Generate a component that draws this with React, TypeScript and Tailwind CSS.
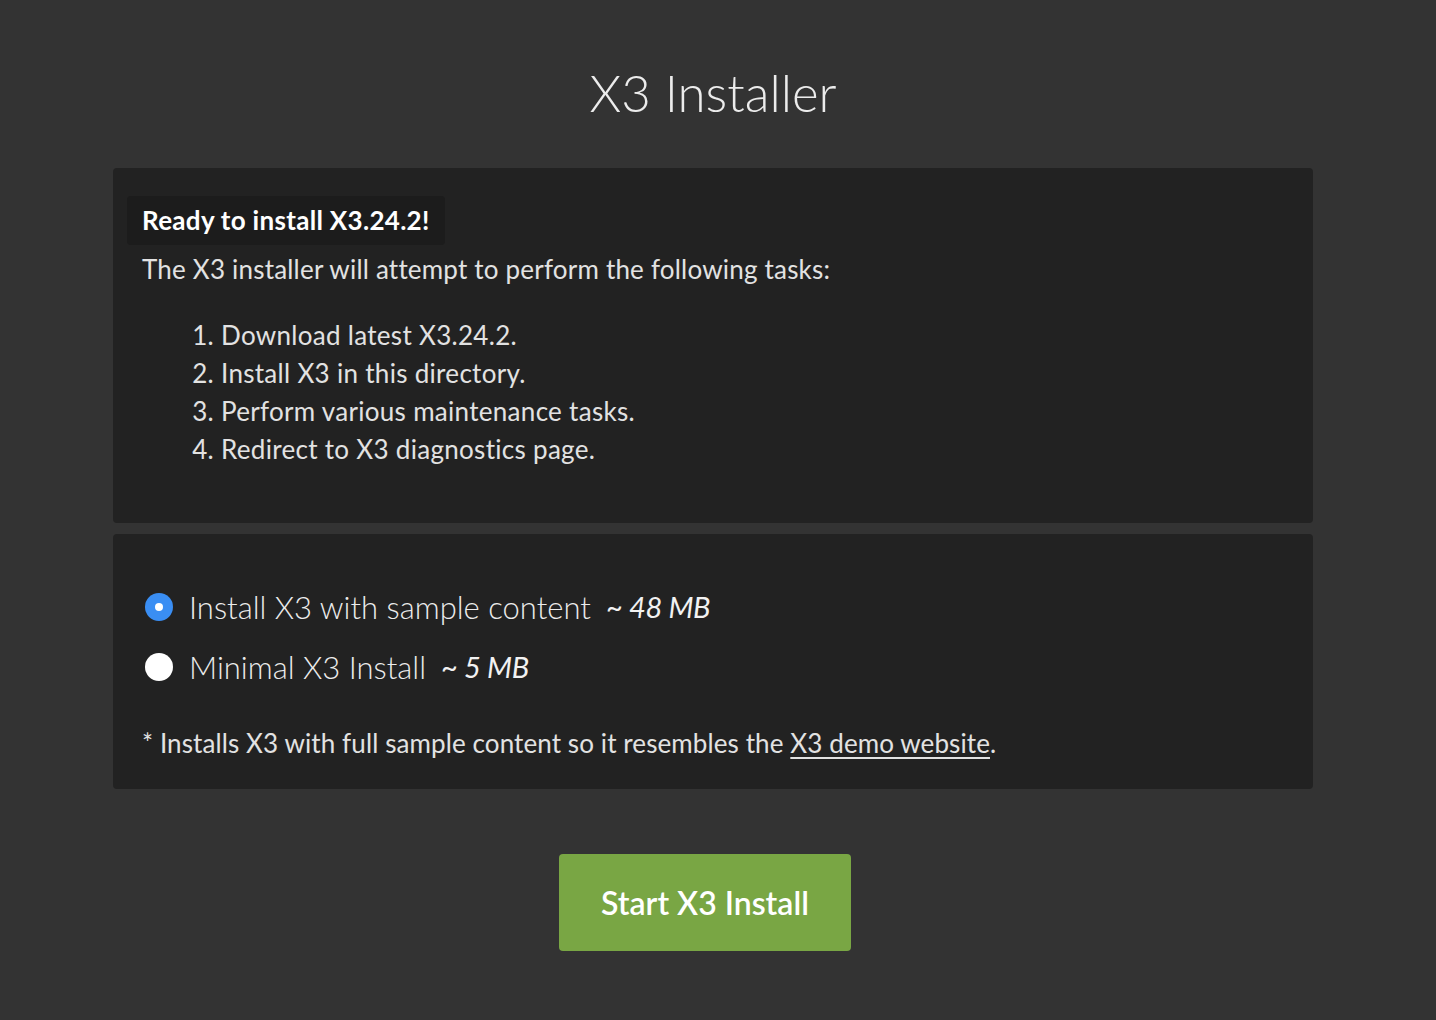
import { useState } from "react";

const tasks = [
  "Download latest X3.24.2.",
  "Install X3 in this directory.",
  "Perform various maintenance tasks.",
  "Redirect to X3 diagnostics page.",
];

const options = [
  { id: "full", label: "Install X3 with sample content", size: "~ 48 MB" },
  { id: "minimal", label: "Minimal X3 Install", size: "~ 5 MB" },
];

function Radio({ checked }: { checked: boolean }) {
  return checked ? (
    <span className="flex h-7 w-7 shrink-0 items-center justify-center rounded-full bg-[#3a8ef3]">
      <span className="h-2 w-2 rounded-full bg-white" />
    </span>
  ) : (
    <span className="h-7 w-7 shrink-0 rounded-full bg-white" />
  );
}

export default function App() {
  const [choice, setChoice] = useState("full");

  return (
    <main className="flex min-h-screen flex-col items-center bg-[#333333] pt-[57px] pr-[10px] pb-[69px] font-['Lato',sans-serif] text-[#e2e2e2]">
      <h1 className="text-[51px] font-light leading-[72px] text-[#ececec]">
        X3 Installer
      </h1>

      <section className="mt-[39px] w-[1200px] rounded bg-[#222222] px-[29px] pt-[28px] pb-[55px]">
        <div className="-mx-[15px] w-fit rounded bg-[#1c1c1c] px-[15px] py-[5px] text-[26px] font-bold leading-[39px] tracking-[0.3px] text-white">
          Ready to install X3.24.2!
        </div>
        <p className="mt-[5px] text-[26px] leading-[38px] tracking-[0.2px]">
          The X3 installer will attempt to perform the following tasks:
        </p>
        <ol className="mt-[28px] list-decimal pl-[79px] text-[26px] leading-[38px] tracking-[0.3px]">
          {tasks.map((task) => (
            <li key={task}>{task}</li>
          ))}
        </ol>
      </section>

      <section className="mt-[11px] w-[1200px] rounded bg-[#222222] px-[29px] pt-[43px] pb-[27px]">
        {options.map((opt) => (
          <button
            key={opt.id}
            type="button"
            onClick={() => setChoice(opt.id)}
            className="flex h-[60px] items-center gap-4 pl-[3px] text-left"
          >
            <Radio checked={choice === opt.id} />
            <span className="text-[31px] font-light text-[#ececec]">
              {opt.label}
            </span>
            <span className="-ml-px text-[29px] italic tracking-[-0.3px] text-[#f2f2f2]">
              {opt.size}
            </span>
          </button>
        ))}
        <p className="mt-[27px] text-[26px] leading-[38px] tracking-[0.1px]">
          * Installs X3 with full sample content so it resembles the{" "}
          <a href="#" className="underline underline-offset-4">
            X3 demo website
          </a>
          .
        </p>
      </section>

      <button
        type="button"
        className="mt-[65px] mr-[16px] h-[97px] w-[292px] rounded bg-[#79a644] text-[32px] font-semibold text-white"
      >
        Start X3 Install
      </button>
    </main>
  );
}
